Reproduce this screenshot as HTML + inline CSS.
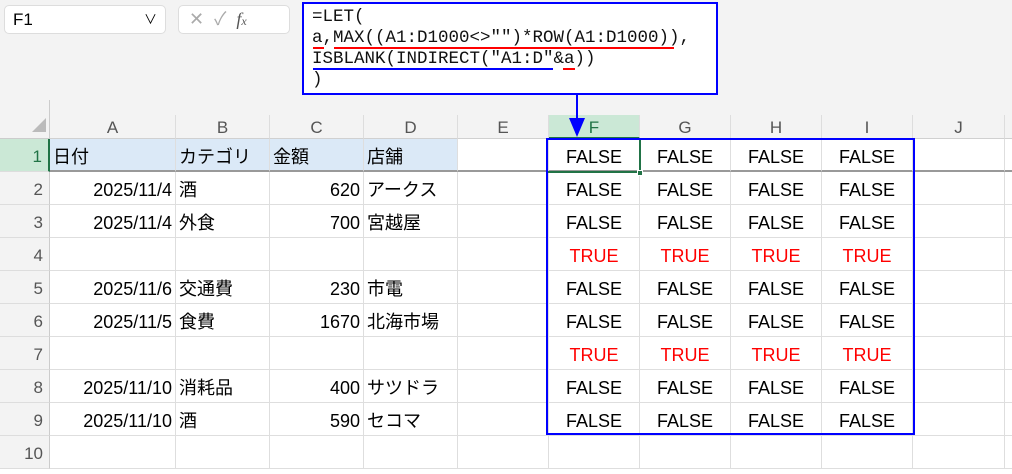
<!DOCTYPE html>
<html><head><meta charset="utf-8"><style>
*{margin:0;padding:0;box-sizing:border-box}
body{width:1012px;height:474px;background:#fff;position:relative;overflow:hidden;font-family:"Liberation Sans","Noto Sans CJK JP",sans-serif}
.a{position:absolute}
.top{left:0;top:0;width:1012px;height:115px;background:#f3f3f3}
.hdr{top:115px;height:24px;background:#f3f3f3;border-bottom:1px solid #d0d0d0;border-right:1px solid #ddd;color:#555;font-size:17px;text-align:center;line-height:26px}
.rh{left:0;width:50px;background:#f3f3f3;border-right:1px solid #ccc;border-bottom:1px solid #ddd;color:#555;font-size:17px;text-align:right;padding-right:6px}
.c{height:33px;border-right:1px solid #dedede;border-bottom:1px solid #dedede;font-size:18px;line-height:36px;white-space:nowrap;padding:0 3px}
.r{text-align:right}.m{text-align:center}
.red{color:#f00}
.mono{font-family:"Liberation Mono",monospace;font-size:17.5px;line-height:21px;white-space:pre;color:#111}
</style></head><body>
<div class="a top"></div>
<div class="a" style="left:4px;top:5px;width:162px;height:29px;background:#fff;border:1px solid #ddd;border-radius:5px;font-size:17px;line-height:27px;padding-left:8px">F1<span style="position:absolute;right:8px;top:0;font-size:13px">&#x2228;</span></div>
<div class="a" style="left:178px;top:5px;width:112px;height:29px;background:#fff;border:1px solid #ddd;border-radius:5px;color:#aaa;font-size:18px;line-height:27px;padding-left:10px">✕ &nbsp;✓ &nbsp;<i style="color:#555;font-family:'Liberation Serif',serif">f<span style="font-size:12px">x</span></i></div>
<div class="a" style="left:302px;top:2px;width:416px;height:93px;background:#fff;border:2px solid #0000ff"></div>
<div class="a mono" style="left:312px;top:7px">=LET(
a,MAX((A1:D1000&lt;&gt;"")*ROW(A1:D1000)),
ISBLANK(INDIRECT("A1:D"&amp;a))
)</div>
<div class="a" style="left:313px;top:47px;width:11px;height:2px;background:#f00"></div>
<div class="a" style="left:334px;top:47px;width:340px;height:2px;background:#f00"></div>
<div class="a" style="left:313px;top:68px;width:240px;height:2px;background:#00f"></div>
<div class="a" style="left:563px;top:68px;width:12px;height:2px;background:#f00"></div>
<div class="a" style="left:0;top:100px;width:50px;height:39px;background:#f3f3f3;border-right:1px solid #ccc;border-bottom:1px solid #ccc"></div>
<div class="a" style="left:32px;top:118px;width:0;height:0;border-left:14px solid transparent;border-bottom:14px solid #bbb"></div>
<div class="a hdr" style="left:50px;width:126px">A</div>
<div class="a hdr" style="left:176px;width:94px">B</div>
<div class="a hdr" style="left:270px;width:94px">C</div>
<div class="a hdr" style="left:364px;width:94px">D</div>
<div class="a hdr" style="left:458px;width:91px">E</div>
<div class="a hdr" style="left:549px;width:91px;background:#cbe8d6;color:#217346;border-bottom:2px solid #217346">F</div>
<div class="a hdr" style="left:640px;width:91px">G</div>
<div class="a hdr" style="left:731px;width:91px">H</div>
<div class="a hdr" style="left:822px;width:91px">I</div>
<div class="a hdr" style="left:913px;width:92px">J</div>
<div class="a hdr" style="left:1005px;width:10px"></div>
<div class="a" style="left:576px;top:95px;width:2px;height:25px;background:#00f"></div>
<div class="a" style="left:569px;top:118px;width:0;height:0;border-left:8px solid transparent;border-right:8px solid transparent;border-top:19px solid #00f"></div>
<div id="g"></div>
<script>
var rows=[["日付","カテゴリ","金額","店舗",1],["2025/11/4","酒","620","アークス"],["2025/11/4","外食","700","宮越屋"],["","","",""],["2025/11/6","交通費","230","市電"],["2025/11/5","食費","1670","北海市場"],["","","",""],["2025/11/10","消耗品","400","サツドラ"],["2025/11/10","酒","590","セコマ"],["","","",""]];
var cols=[[50,126],[176,94],[270,94],[364,94],[458,91],[549,91],[640,91],[731,91],[822,91],[913,92],[1005,20]];
var h="";
for(var i=0;i<10;i++){var y=139+i*33;var r=rows[i];
h+='<div class="a rh" style="top:'+y+'px;height:33px;line-height:35px;'+(i==0?'background:#cbe8d6;color:#217346;border-right:2px solid #217346':'')+'">'+(i+1)+'</div>';
for(var j=0;j<11;j++){var t="",cl="c",st="";
if(j<4&&i<10){t=r[j]||"";if(i>0&&(j==0||j==2))cl+=" r";}
if(i==0&&j<4)st="background:#dbe9f7;";
if(j>=5&&j<=8&&i<9){var tr=(i==3||i==6);t=tr?"TRUE":"FALSE";cl+=" m"+(tr?" red":"");}
if(i==0)st+="border-bottom:2px solid #999;";
h+='<div class="a '+cl+'" style="left:'+cols[j][0]+'px;top:'+y+'px;width:'+cols[j][1]+'px;'+st+'">'+t+'</div>';}}
document.getElementById("g").innerHTML=h;
</script>
<div class="a" style="left:547px;top:139px;width:94px;height:34px;border:2px solid #217346;border-left:none;border-top:none"></div>
<div class="a" style="left:637px;top:170px;width:6px;height:6px;background:#217346;border:1px solid #fff"></div>
<div class="a" style="left:546px;top:138px;width:369px;height:297px;border:2px solid #0000ff"></div>
</body></html>
